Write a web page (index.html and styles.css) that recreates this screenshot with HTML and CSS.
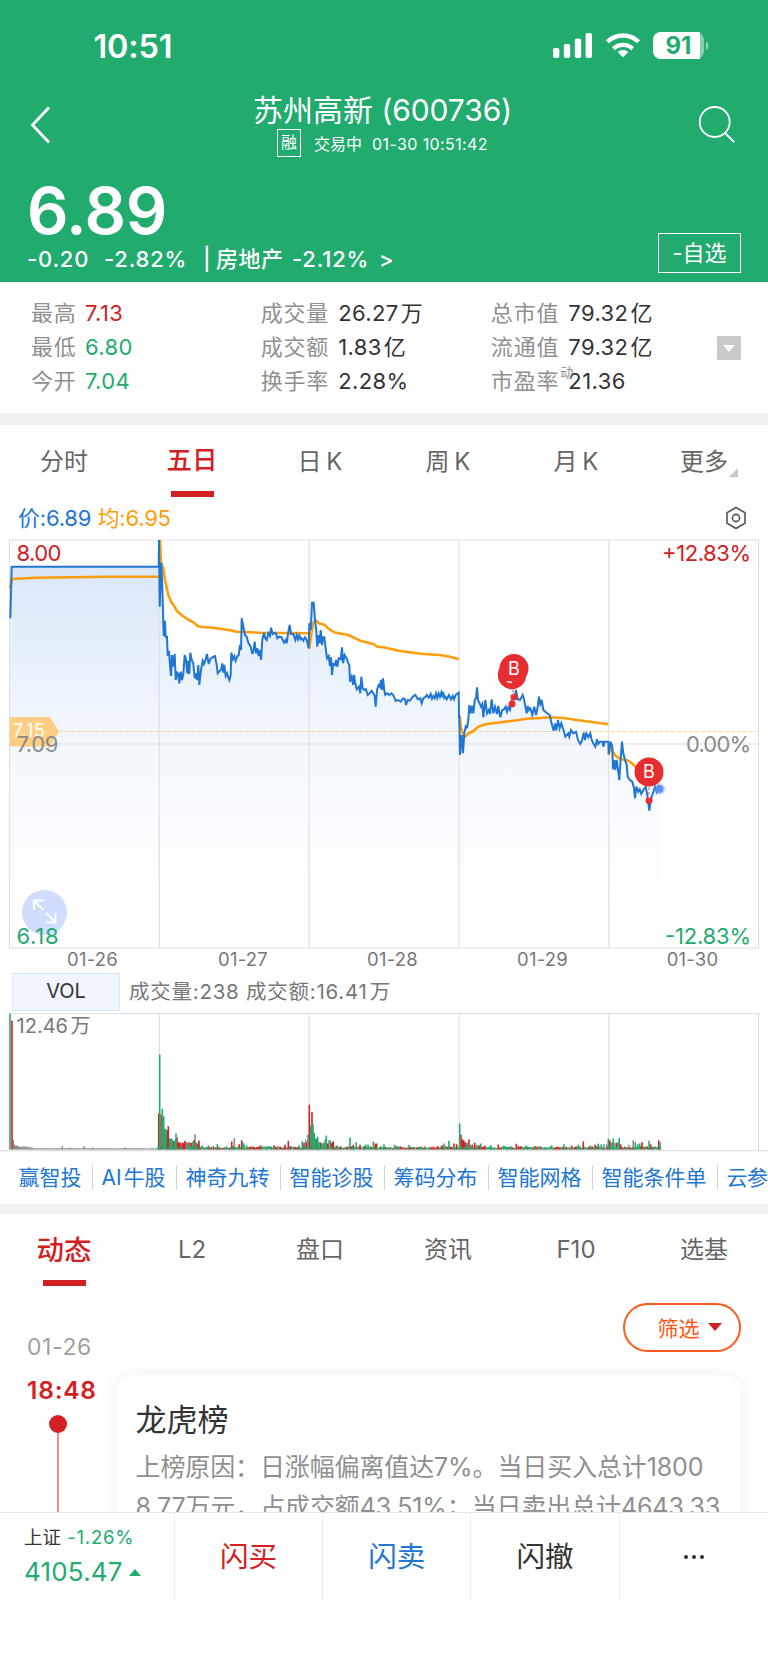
FILE: index.html
```html
<!DOCTYPE html>
<html lang="zh-CN">
<head>
    <meta charset="UTF-8">
    <meta name="viewport" content="width=device-width, initial-scale=1.0">
    <title>苏州高新 (600736)</title>
    <link rel="stylesheet" href="styles.css">
</head>
<body>
    <header class="header">
        <div class="status-bar">
            <span class="clock">10:51</span>
            <svg class="status-icons" width="160" height="30" viewBox="0 0 160 30">
                <g fill="#fff">
                    <rect x="3" y="17" width="6.4" height="10" rx="2"/>
                    <rect x="13.8" y="13" width="6.4" height="14" rx="2"/>
                    <rect x="24.8" y="7.5" width="6.4" height="19.5" rx="2"/>
                    <rect x="35.6" y="2" width="6.4" height="25" rx="2"/>
                    <path d="M73 26.500l-5.300-5.400a7.700 7.700 0 0 1 10.600 0z"/>
                </g>
                <g fill="none" stroke="#fff" stroke-width="4.300">
                    <path d="M63.400 17.600a14 14 0 0 1 19.200 0"/>
                    <path d="M57.400 10.800a22.500 22.500 0 0 1 31.200 0"/>
                </g>
                <rect x="103" y="1" width="51" height="27" rx="8" fill="#fff" opacity=".45"/>
                <path d="M111 1h39v27h-39a8 8 0 0 1-8-8V9a8 8 0 0 1 8-8z" fill="#fff"/>
                <path d="M156 10.500a5 5 0 0 1 0 8.500z" fill="#fff" opacity=".5"/>
                <text x="128.500" y="23.200" class="battery-text">91</text>
            </svg>
        </div>
        <div class="nav">
            <svg class="back" width="22" height="40" viewBox="0 0 22 40"><path d="M20 2.500L3.500 20 20 37.500" fill="none" stroke="#fff" stroke-width="2.800"/></svg>
            <div class="title">
                <h1>苏州高新 <span>(600736)</span></h1>
                <p><i class="margin-tag">融</i><span class="state">交易中</span><span class="time">01-30 10:51:42</span></p>
            </div>
            <svg class="search" width="38" height="38" viewBox="0 0 38 38"><g fill="none" stroke="#fff" stroke-width="1.800"><circle cx="16.700" cy="17" r="15"/><path d="M27 28l9 9"/></g></svg>
        </div>
        <div class="quote">
            <div>
                <div class="price">6.89</div>
                <div class="change"><span class="c1">-0.20</span><span class="c2">-2.82%</span><span class="c3">|</span><span class="c4">房地产</span><span class="c5">-2.12%</span><span>&gt;</span></div>
            </div>
            <button class="watch">-自选</button>
        </div>
    </header>

    <section class="stats">
        <dl>
            <dt>最高</dt><dd class="up">7.13</dd>
            <dt>最低</dt><dd class="down">6.80</dd>
            <dt>今开</dt><dd class="down">7.04</dd>
        </dl>
        <dl class="wide">
            <dt>成交量</dt><dd>26.27<b>万</b></dd>
            <dt>成交额</dt><dd>1.83<b>亿</b></dd>
            <dt>换手率</dt><dd>2.28%</dd>
        </dl>
        <dl class="wide last">
            <dt>总市值</dt><dd>79.32<b>亿</b></dd>
            <dt>流通值</dt><dd>79.32<b>亿</b></dd>
            <dt>市盈率<sup>动</sup></dt><dd>21.36</dd>
        </dl>
        <svg class="expand-stats" width="24" height="24" viewBox="0 0 24 24"><rect width="24" height="24" rx="1.500" fill="#c9c9c9"/><path d="M6 9h12l-6 7z" fill="#fff"/></svg>
    </section>

    <nav class="tabs period">
        <a>分时</a>
        <a class="active">五日</a>
        <a>日 K</a>
        <a>周 K</a>
        <a>月 K</a>
        <a class="more">更多</a>
    </nav>

    <div class="legend">
        <span class="now">价:6.89</span><span class="avg">均:6.95</span>
        <svg width="22" height="24" viewBox="0 0 22 24"><g fill="none" stroke="#555" stroke-width="1.600"><path d="M11 1.500l9 5.200v10.600l-9 5.200-9-5.200V6.700z"/><circle cx="11" cy="12" r="3.600"/></g></svg>
    </div>

    <!-- five day price chart -->
    <svg class="price-chart" width="768" height="442" viewBox="0 0 768 442">
        <defs>
            <linearGradient id="fill" gradientUnits="userSpaceOnUse" x1="0" y1="20" x2="0" y2="380">
                <stop offset="0" stop-color="#2176d2" stop-opacity=".18"/>
                <stop offset=".55" stop-color="#4186e2" stop-opacity=".06"/>
                <stop offset="1" stop-color="#5a96ff" stop-opacity="0"/>
            </linearGradient>
        </defs>
        <path id="area" fill="url(#fill)"/>
        <g class="grid">
            <path d="M9.500 10H758.500V418H9.500zM159.300 10V418M309.200 10V418M459 10V418M608.800 10V418M9.500 214H758.500"/>
        </g>
        <path d="M59 201.500H758" stroke="#ffd399" stroke-width="1.200" stroke-dasharray="4 2"/>
        <path id="avgLine" fill="none" stroke="#ff9d0a" stroke-width="2.600" stroke-linejoin="round"/>
        <path id="priceLine" fill="none" stroke="#2176d2" stroke-width="2"/>
        <path d="M9.500 187H50l9 14.500-9 15H9.500z" fill="#ffce85"/>
        <circle cx="44.500" cy="382.500" r="22.500" fill="#d0ddff"/>
        <path d="M43.500 380l-10-9.500M34 380v-9.500h9.500M46 383l10 9.500M46 392.500h9.500V383" fill="none" stroke="#fff" stroke-width="1.900"/>
        <text x="13" y="207" class="tag" textLength="32">7.15</text>
        <g class="scale">
            <text x="16.500" y="31" class="up" textLength="45">8.00</text>
            <text x="16.500" y="222" textLength="42">7.09</text>
            <text x="16.500" y="414" class="down" textLength="42">6.18</text>
            <text x="662" y="31" class="up" textLength="89">+12.83%</text>
            <text x="686" y="222" textLength="65">0.00%</text>
            <text x="665" y="414" class="down" textLength="86">-12.83%</text>
        </g>
        <g class="dates">
            <text x="92.500" y="436">01-26</text>
            <text x="243" y="436">01-27</text>
            <text x="392.500" y="436">01-28</text>
            <text x="542.500" y="436">01-29</text>
            <text x="692.500" y="436">01-30</text>
        </g>
        <!-- buy markers -->
        <g fill="#e62e30">
            <circle cx="512" cy="145" r="14.200"/>
            <circle cx="514" cy="138.500" r="14.500"/>
            <circle cx="512" cy="174" r="3.500"/>
            <circle cx="514" cy="167" r="3.500"/>
            <circle cx="649" cy="242" r="14.500"/>
            <circle cx="649" cy="270.500" r="3.500"/>
        </g>
        <path d="M513 159.500v6M649 257v12" stroke="#f58a8b" stroke-width="1.600" stroke-dasharray="3 2"/>
        <path d="M507 151.500l5 1" stroke="#fff" stroke-width="1.400"/>
        <text x="514" y="144.800" class="marker">B</text>
        <text x="649" y="248.300" class="marker">B</text>
        <circle cx="659.500" cy="259" r="6" fill="#6c9cf0" opacity=".3"/>
        <circle cx="659.500" cy="259" r="4" fill="#5b93ee"/>
    </svg>

    <div class="indicator">
        <span class="vol">VOL</span>
        <span class="vol-text">成交量:238 成交额:16.41<b>万</b></span>
    </div>

    <svg class="volume-chart" width="768" height="141" viewBox="0 0 768 141">
        <g class="grid"><path d="M9.500 1.500H758.500V138M159.300 1.500V138M309.200 1.500V138M459 1.500V138M608.800 1.500V138M0 138.700H768"/></g>
        <g class="bars">
            <path id="volGray" stroke="#8a8a8a"/>
            <path id="volUp" stroke="#d32023"/>
            <path id="volDown" stroke="#22ab6f"/>
        </g>
        <g class="vol-max"><text x="16.500" y="21" textLength="51.500">12.46</text><text x="70.500" y="21">万</text></g>
    </svg>

    <nav class="tools">
        <a>赢智投</a><a class="ai">AI 牛股</a><a>神奇九转</a><a>智能诊股</a><a>筹码分布</a><a>智能网格</a><a>智能条件单</a><a>云参</a>
    </nav>

    <nav class="tabs info">
        <a class="active">动态</a>
        <a>L2</a>
        <a>盘口</a>
        <a>资讯</a>
        <a>F10</a>
        <a>选基</a>
    </nav>

    <section class="feed">
        <div class="feed-head">
            <span class="date">01-26</span>
            <button class="filter">筛选<i></i></button>
        </div>
        <div class="feed-item">
            <div class="timeline">
                <strong>18:48</strong>
                <i></i>
            </div>
            <article class="card">
                <h2>龙虎榜</h2>
                <p>上榜原因：日涨幅偏离值达7%。当日买入总计1800<br>8.77万元，占成交额43.51%；当日卖出总计4643.33</p>
            </article>
        </div>
    </section>

    <footer class="bottom">
        <div class="index">
            <p>上证 <span>-1.26%</span></p>
            <strong>4105.47<i></i></strong>
        </div>
        <a class="buy">闪买</a>
        <a class="sell">闪卖</a>
        <a>闪撤</a>
        <a class="dots"><i></i><i></i><i></i></a>
    </footer>
    <script src="script.js"></script>
</body>
</html>
```
FILE: styles.css
```css
* {
    box-sizing: border-box;
}

body {
    margin: 0;
    width: 768px;
    height: 1662px;
    overflow: hidden;
    background: #fff;
    color: #333;
    font-family: Inter, "Noto Sans CJK SC", sans-serif;
    font-size: 22px;
}

h1, h2, p, dl, dd {
    margin: 0;
}

i, b {
    font-style: normal;
    font-weight: inherit;
}

svg {
    display: block;
}

button {
    font: inherit;
    background: none;
    padding: 0;
}

.up {
    color: #d32023;
    fill: #d32023;
}

.down {
    color: #22ab6f;
    fill: #22ab6f;
}

/* header */
.header {
    height: 281.5px;
    background: #22ab6f;
    color: #fff;
}

.status-bar {
    height: 92px;
    padding: 31px 58px 0 93.5px;
    display: flex;
    justify-content: space-between;
}

.clock {
    font-size: 32.5px;
    line-height: 31px;
    font-weight: 600;
    letter-spacing: -0.2px;
}

.battery-text {
    font-size: 24px;
    font-weight: 700;
    fill: #22ab6f;
    text-anchor: middle;
}

.nav {
    height: 88px;
    display: flex;
    justify-content: space-between;
    padding: 0 32px 0 29px;
}

.back {
    margin-top: 12.5px;
}

.search {
    margin-top: 13px;
}

.title {
    text-align: center;
    padding-left: 16px;
}

.title h1 {
    font-size: 30px;
    line-height: 37px;
    font-weight: 400;
}

.title h1 span {
    letter-spacing: -0.1px;
}

.title p {
    display: flex;
    justify-content: center;
    font-size: 16px;
    line-height: 30px;
}

.time {
    letter-spacing: 0.4px;
}

.margin-tag {
    width: 24px;
    height: 28px;
    border: 1px solid #fff;
    line-height: 25px;
}

.state {
    margin: 0 10px 0 13px;
}

.quote {
    display: flex;
    justify-content: space-between;
    padding: 0 27px 0 27px;
}

.price {
    font-size: 65px;
    line-height: 62px;
    font-weight: 600;
    letter-spacing: -0.5px;
}

.change {
    display: flex;
    font-size: 22px;
    line-height: 34px;
    font-weight: 500;
    letter-spacing: 0.8px;
}

.c1 { width: 77px; }
.c2 { width: 99px; }
.c3 { width: 13px; }
.c4 { width: 76px; letter-spacing: 0.5px; }
.c5 { width: 87px; }

.watch {
    width: 83px;
    height: 40px;
    margin-top: 53px;
    border: 1px solid #fff;
    color: #fff;
    line-height: 36px;
}

/* stats */
.stats {
    height: 143.500px;
    border-bottom: 12px solid #f1f1f1;
    padding: 14.500px 27px 0 31px;
    display: flex;
}

.stats dl {
    width: 230px;
    display: grid;
    grid-template-columns: 54px 1fr;
    grid-auto-rows: 34px;
    line-height: 34px;
}

.stats .wide {
    width: 230.500px;
    grid-template-columns: 77.500px 1fr;
}

.stats .last {
    width: 226.500px;
}

.stats dt {
    color: #8f8f8f;
    letter-spacing: 0.8px;
    white-space: nowrap;
}

.stats dd {
    letter-spacing: 0.4px;
}

.stats b {
    margin-left: 2px;
}

.stats sup {
    position: absolute;
    font-size: 13px;
    line-height: 14px;
    margin: 1px 0 0 1px;
}

.expand-stats {
    margin-top: 40px;
}

/* tabs */
.tabs {
    display: grid;
    grid-template-columns: repeat(6, 128px);
    text-align: center;
    font-size: 24px;
    color: #666;
}

.tabs a {
    position: relative;
    word-spacing: -2px;
}

.tabs .active {
    color: #d32023;
    display: flex;
    flex-direction: column;
    align-items: center;
}

.tabs .active::after {
    content: "";
    width: 43px;
    height: 6px;
    background: #d32023;
}

.period {
    height: 72px;
    line-height: 67px;
    padding-top: 3px;
}

.period .active {
    font-size: 25.5px;
    font-weight: 500;
    line-height: 63px;
}

.more::after {
    content: "";
    position: absolute;
    right: 30px;
    bottom: 20px;
    border-left: 9px solid transparent;
    border-bottom: 9px solid #c8c8c8;
}

.legend {
    height: 33px;
    line-height: 42px;
    padding: 0 21px 0 18px;
    display: flex;
    letter-spacing: -0.2px;
}

.legend .now {
    width: 79.5px;
    color: #2176d2;
}

.legend .avg {
    color: #ff9d0a;
}

.legend svg {
    margin: 9px 0 0 auto;
}

/* charts */
.grid {
    fill: none;
    stroke: #dedfe2;
    stroke-width: 1.2px;
}

.scale {
    font-size: 22px;
    fill: #8a8a8a;
}

.tag {
    font-size: 18px;
    fill: #fff;
}

.dates {
    font-size: 18.5px;
    letter-spacing: 0.2px;
    fill: #777;
    text-anchor: middle;
}

.marker {
    font-size: 18px;
    fill: #fff;
    text-anchor: middle;
}

.indicator {
    height: 40px;
    padding: 1px 12px 0;
    display: flex;
    color: #777;
    font-size: 20.5px;
    line-height: 38px;
}

.vol {
    width: 108px;
    height: 37.500px;
    border: 1px solid #d9e5fc;
    background: #f1f5fe;
    color: #333;
    font-size: 20px;
    line-height: 35px;
    text-align: center;
    margin-right: 9px;
}

.vol-text {
    letter-spacing: 0.75px;
}

.vol-text b {
    margin-left: 2px;
}

.bars {
    stroke-width: 1.6px;
}

.vol-max {
    font-size: 20px;
    fill: #777;
}

.tools {
    height: 61px;
    border-bottom: 10px solid #f1f1f1;
    padding: 12px 0 0 9.5px;
    display: flex;
    white-space: nowrap;
    color: #2176d2;
    font-size: 21px;
    line-height: 25px;
}

.tools a {
    height: 25px;
    padding: 0 10px 0 9px;
    border-right: 1px solid #d5d5d5;
    flex: none;
}

.tools .ai {
    word-spacing: -4px;
}

.tools a:last-child {
    border: 0;
    padding-right: 0;
    letter-spacing: -0.5px;
}

.info {
    height: 72px;
    line-height: 72px;
}

.info .active {
    font-size: 27.5px;
    font-weight: 500;
    line-height: 72px;
}

.info .active::after {
    margin-top: -6px;
}

/* feed */
.feed {
    height: 226px;
    overflow: hidden;
}

.feed-head {
    height: 89px;
    padding: 17px 27px 0;
    display: flex;
    justify-content: space-between;
}

.date {
    font-size: 23px;
    line-height: 88px;
    letter-spacing: 0.6px;
    color: #a0a0a0;
}

.filter {
    width: 118px;
    height: 49px;
    border: 2px solid #ff5a1c;
    border-radius: 25px;
    color: #ff5410;
    font-size: 21px;
    padding: 0 0 2px 15px;
    display: flex;
    align-items: center;
    justify-content: center;
}

.filter i {
    margin-left: 8px;
    border: 7px solid transparent;
    border-top: 8px solid #d32023;
    border-bottom: 0;
}

.feed-item {
    display: flex;
}

.timeline {
    width: 117px;
    color: #d32023;
    display: flex;
    flex-direction: column;
}

.timeline strong {
    font-size: 24.5px;
    font-weight: 600;
    line-height: 30px;
    letter-spacing: 0.8px;
    padding-left: 27px;
}

.timeline i {
    width: 18px;
    height: 18px;
    margin: 10px 0 0 48.500px;
    border-radius: 50%;
    background: #d32023;
}

.timeline::after {
    content: "";
    width: 1.5px;
    height: 140px;
    margin-left: 57px;
    background: #f08d90;
}

.card {
    width: 624px;
    height: 200px;
    padding: 25px 18.5px;
    border-radius: 15px;
    background: #fff;
    box-shadow: 0 0 16px rgba(0, 0, 0, 0.07);
}

.card h2 {
    font-size: 31px;
    line-height: 40px;
    font-weight: 400;
}

.card p {
    margin-top: 8px;
    font-size: 25px;
    line-height: 39.500px;
    letter-spacing: -0.12px;
    color: #8f8f8f;
    white-space: nowrap;
}

/* bottom bar */
.bottom {
    position: relative;
    height: 150px;
    border-top: 1px solid #e6e6e6;
    background: #fff;
    display: flex;
}

.bottom > * {
    width: 148.500px;
    height: 88px;
    border-right: 1px solid #ececec;
    font-size: 28.500px;
    line-height: 87px;
    text-align: center;
}

.bottom > :last-child {
    border: 0;
}

.bottom .index {
    width: 175px;
    padding: 9px 0 0 24px;
    text-align: left;
    line-height: 30px;
}

.index p {
    font-size: 18.5px;
}

.index span, .index strong {
    color: #22ab6f;
}

.index span {
    margin-left: 1px;
    letter-spacing: 0.8px;
}

.index strong {
    display: flex;
    align-items: center;
    font-size: 26px;
    font-weight: 400;
    letter-spacing: 0.2px;
    line-height: 40px;
}

.index i {
    margin-left: 6px;
    border: 6.5px solid transparent;
    border-top: 0;
    border-bottom: 7px solid #22ab6f;
}

.buy {
    color: #d32023;
}

.sell {
    color: #2176d2;
}

.dots {
    display: flex;
    align-items: center;
    justify-content: center;
    gap: 4px;
}

.dots i {
    width: 4px;
    height: 4px;
    border-radius: 50%;
    background: #333;
}
```
FILE: script.js
```js
// points are kept at three units per pixel, x/y is the origin of each part
const priceParts = [
    { x: 0, y: 0, points: "31,265 35,110 476,110 477,30 479,230 484,98 487,170 491,318 495,272 497,320 501,320 503,378 507,362 510,405 513,438 516,375 519,410 524,372 527,450 532,428 535,432 538,460 542,425 546,450 550,432 554,375 558,388 562,430 565,392 568,432 571,368 575,390 580,400 584,445 588,430 591,450 595,405 598,465 603,420 608,392 612,402 616,392 621,372 626,402 631,388 637,382 645,378 650,405 653,430 660,422 664,418 667,400 670,428 673,405 677,438 681,430 684,440 688,450 692,435 694,368 699,388 703,378 707,392 712,378 716,376 720,345 723,360 725,265 730,290 735,315 740,320 745,338 752,350" },
    { x: 750, y: 0, points: "7,372 11,358 14,335 18,370 22,355 26,378 30,360 33,390 37,330 42,308 46,325 50,330 55,310 60,318 63,293 68,312 75,308 79,312 82,325 88,320 95,322 102,338 107,330 110,340 114,310 119,285 123,312 130,312 136,330 140,315 144,328 148,316 152,328 155,325 160,332 165,322 170,330 176,355 178,280 182,300 186,218 191,218 195,270 199,300 202,350 206,315 209,340 212,300 216,345 219,322 223,322 227,355 231,385 236,378 240,408 243,382 246,435 250,402 255,405 258,390 262,410 266,385 272,388 276,352 279,400 284,375 290,385 294,398 298,405 300,455 305,440 310,465 312,435 316,460 320,478 327,470 331,490 334,440 338,475 343,480 348,478 353,495 359,490 365,482 370,490 374,498 377,530 381,480 386,465 390,470 393,450 396,480 399,445 403,480 406,495 412,490 418,495 424,490 430,495 437,512 445,510 452,515 460,505 465,508 468,525 473,510 480,512 488,500 496,495 504,508 511,505 515,520 520,505 527,500 530,495 537,503 542,492 546,506 550,498 554,505 558,490 562,504 566,490 570,500 574,488 577,502 579,485 583,504 586,500 590,508 597,495 603,508 608,498 612,508 617,495 626,488 627,560" },
    { x: 1320, y: 210, points: "58,350 60,465 65,405 69,460 73,400 78,375 81,385 85,360 88,315 92,340 96,318 100,340 104,300 108,295 111,262 114,300 118,308 123,320 127,312 130,352 136,300 141,340 146,330 150,342 155,298 160,340 165,320 171,342 175,318 181,352 187,330 192,328 197,320 201,335 205,322 210,330 214,305 220,290 226,285 228,270 233,298 240,300 248,285 252,298 257,325 260,340 263,318 266,330 271,325 277,345 283,320 288,345 293,320 297,290 301,312 305,300 310,330 316,335 322,340 329,345 333,362 337,378 341,392 345,370 349,392 354,360 359,385 364,370 369,385 376,410 385,400 388,410 393,390 400,400 408,395 414,420 421,432 425,425 431,398 435,420 439,400 445,412 451,400 455,420 460,430 466,440 471,418 475,432 480,425 488,425 490,440 494,425 505,425 506,462 512,425 517,440 519,508 523,480 526,510 530,480 534,510 538,540 542,475 546,425 550,460 555,480 560,495 563,530 570,540 577,545 582,565 585,595 589,560 595,575 599,568 604,582 610,570 617,560 622,585 628,632 632,600 637,585 641,572 645,560 650,575 655,560 658,567" }
];

const avgParts = [
    { x: 0, y: 0, points: "30,175 36,147 110,143 320,140 478,140" },
    { x: 0, y: 0, points: "480,30 483,98 489,112 495,150 505,195 515,218 525,232 530,242 548,258 570,272 582,278 592,287 602,290 645,294 690,301 710,305 780,308 928,310" },
    { x: 750, y: 0, points: "178,357 184,310 190,278 198,272 207,280 225,285 232,293 252,307 295,315 330,332 370,342 382,350 400,352 450,363 520,372 570,375 600,380 626,388" },
    { x: 1320, y: 210, points: "59,347 62,380 70,405 76,410 86,400 100,393 115,380 135,373 170,368 220,362 260,356 300,354 330,352 370,354 410,360 450,365 505,373" },
    { x: 1320, y: 210, points: "506,465 512,430 518,455 525,465 532,472 545,478 562,481 572,487 590,503 610,520" }
];

function toPixels(part) {
    return part.points.split(" ").map((p) => {
        const [x, y] = p.split(",").map(Number);
        return ((part.x + x) / 3).toFixed(1) + " " + ((part.y + y) / 3).toFixed(1);
    });
}

const price = priceParts.flatMap(toPixels).join("L");
document.getElementById("priceLine").setAttribute("d", "M" + price);
document.getElementById("area").setAttribute("d", "M10.3 418L" + price + "L659.3 418Z");
document.getElementById("avgLine").setAttribute("d", avgParts.map((part) => "M" + toPixels(part).join("L")).join(""));

// volume peaks: x, height, colour (r up, g down, n flat)
const peaks = "30,408,g 36,387,r 40,28,n 44,14,n 48,10,n 52,12,n 56,9,n 60,8,n 66,9,n 72,10,n 78,9,n 84,8,n 90,7,n 96,6,n 187,10,n 211,6,n 253,10,n 278,6,n 377,6,n " +
    "476,108,r 479,285,g 483,105,r 487,122,g 491,100,g 495,62,g 498,60,g 501,58,r 505,70,r 509,34,g 513,33,g 517,30,g 521,25,r 525,28,g 528,48,g 531,37,r 535,22,r 539,22,r 543,19,n 547,20,r 551,20,r 555,26,r 559,22,n 563,20,g 567,22,r 571,20,n 575,20,r 579,24,g 582,28,r 585,46,n 588,22,g 592,18,r 597,27,r 607,12,g 625,13,g 652,16,g 695,24,r 703,34,n 718,16,r 725,28,r 729,22,g 733,14,g 740,12,g 782,12,r 822,13,r 855,14,r 865,26,r 897,13,g 907,25,g 912,20,r 917,30,n 920,22,r 924,44,g " +
    "928,134,r 932,72,g 936,112,r 939,76,g 943,50,g 947,34,g 950,30,r 953,38,g 957,22,g 961,22,r 965,18,g 969,20,n 973,20,g 976,30,g 979,42,g 983,18,r 987,28,n 991,28,g 995,20,r 1000,25,r 1012,12,g 1050,36,g 1060,14,r 1069,22,g 1080,14,r 1097,15,g 1104,15,g 1120,24,g 1126,18,r 1130,18,r 1152,16,g 1185,14,g 1227,14,n 1275,9,r 1326,13,r 1332,18,g 1347,26,g 1362,18,r 1370,16,r " +
    "1379,78,g 1383,45,r 1387,30,r 1391,28,r 1395,22,r 1399,20,n 1403,20,g 1407,30,r 1412,14,n 1417,14,r 1424,20,r 1430,14,g 1437,13,r 1442,18,g 1455,12,r 1473,13,g 1495,15,r 1510,11,g 1549,17,r 1577,12,g 1605,10,r 1655,12,g 1692,16,g 1715,12,r 1735,14,g 1750,24,r 1770,12,g 1785,14,r 1795,18,g 1804,16,g 1812,16,n 1820,15,n " +
    "1825,32,g 1829,28,r 1833,20,n 1837,22,g 1840,33,g 1845,20,n 1850,20,r 1854,22,g 1858,35,g 1862,16,r 1873,10,g 1886,14,n 1900,28,n 1906,22,g 1913,16,g 1919,18,g 1926,22,r 1938,10,g 1947,26,g 1952,16,r 1976,28,r 1980,22,g";

const bars = { r: "", g: "", n: "" };

function addBar(x, height, color) {
    bars[color] += `M${(x / 3).toFixed(1)} 137.5v${(-height / 3).toFixed(1)}`;
}

// quiet minutes between the peaks
let seed = 7;
for (let x = 40; x < 1982; x += 3) {
    seed = (seed * 1103515245 + 12345) % 2147483648;
    const r = seed / 2147483648;
    if (x < 474) {
        addBar(x, 3 + r, "n");
    } else {
        addBar(x, 4 + r * 6, "rgrgn"[Math.floor(r * 977) % 5]);
    }
}
peaks.split(" ").forEach((peak) => {
    const [x, height, color] = peak.split(",");
    addBar(Number(x), Number(height), color);
});

document.getElementById("volUp").setAttribute("d", bars.r);
document.getElementById("volDown").setAttribute("d", bars.g);
document.getElementById("volGray").setAttribute("d", bars.n);
```
